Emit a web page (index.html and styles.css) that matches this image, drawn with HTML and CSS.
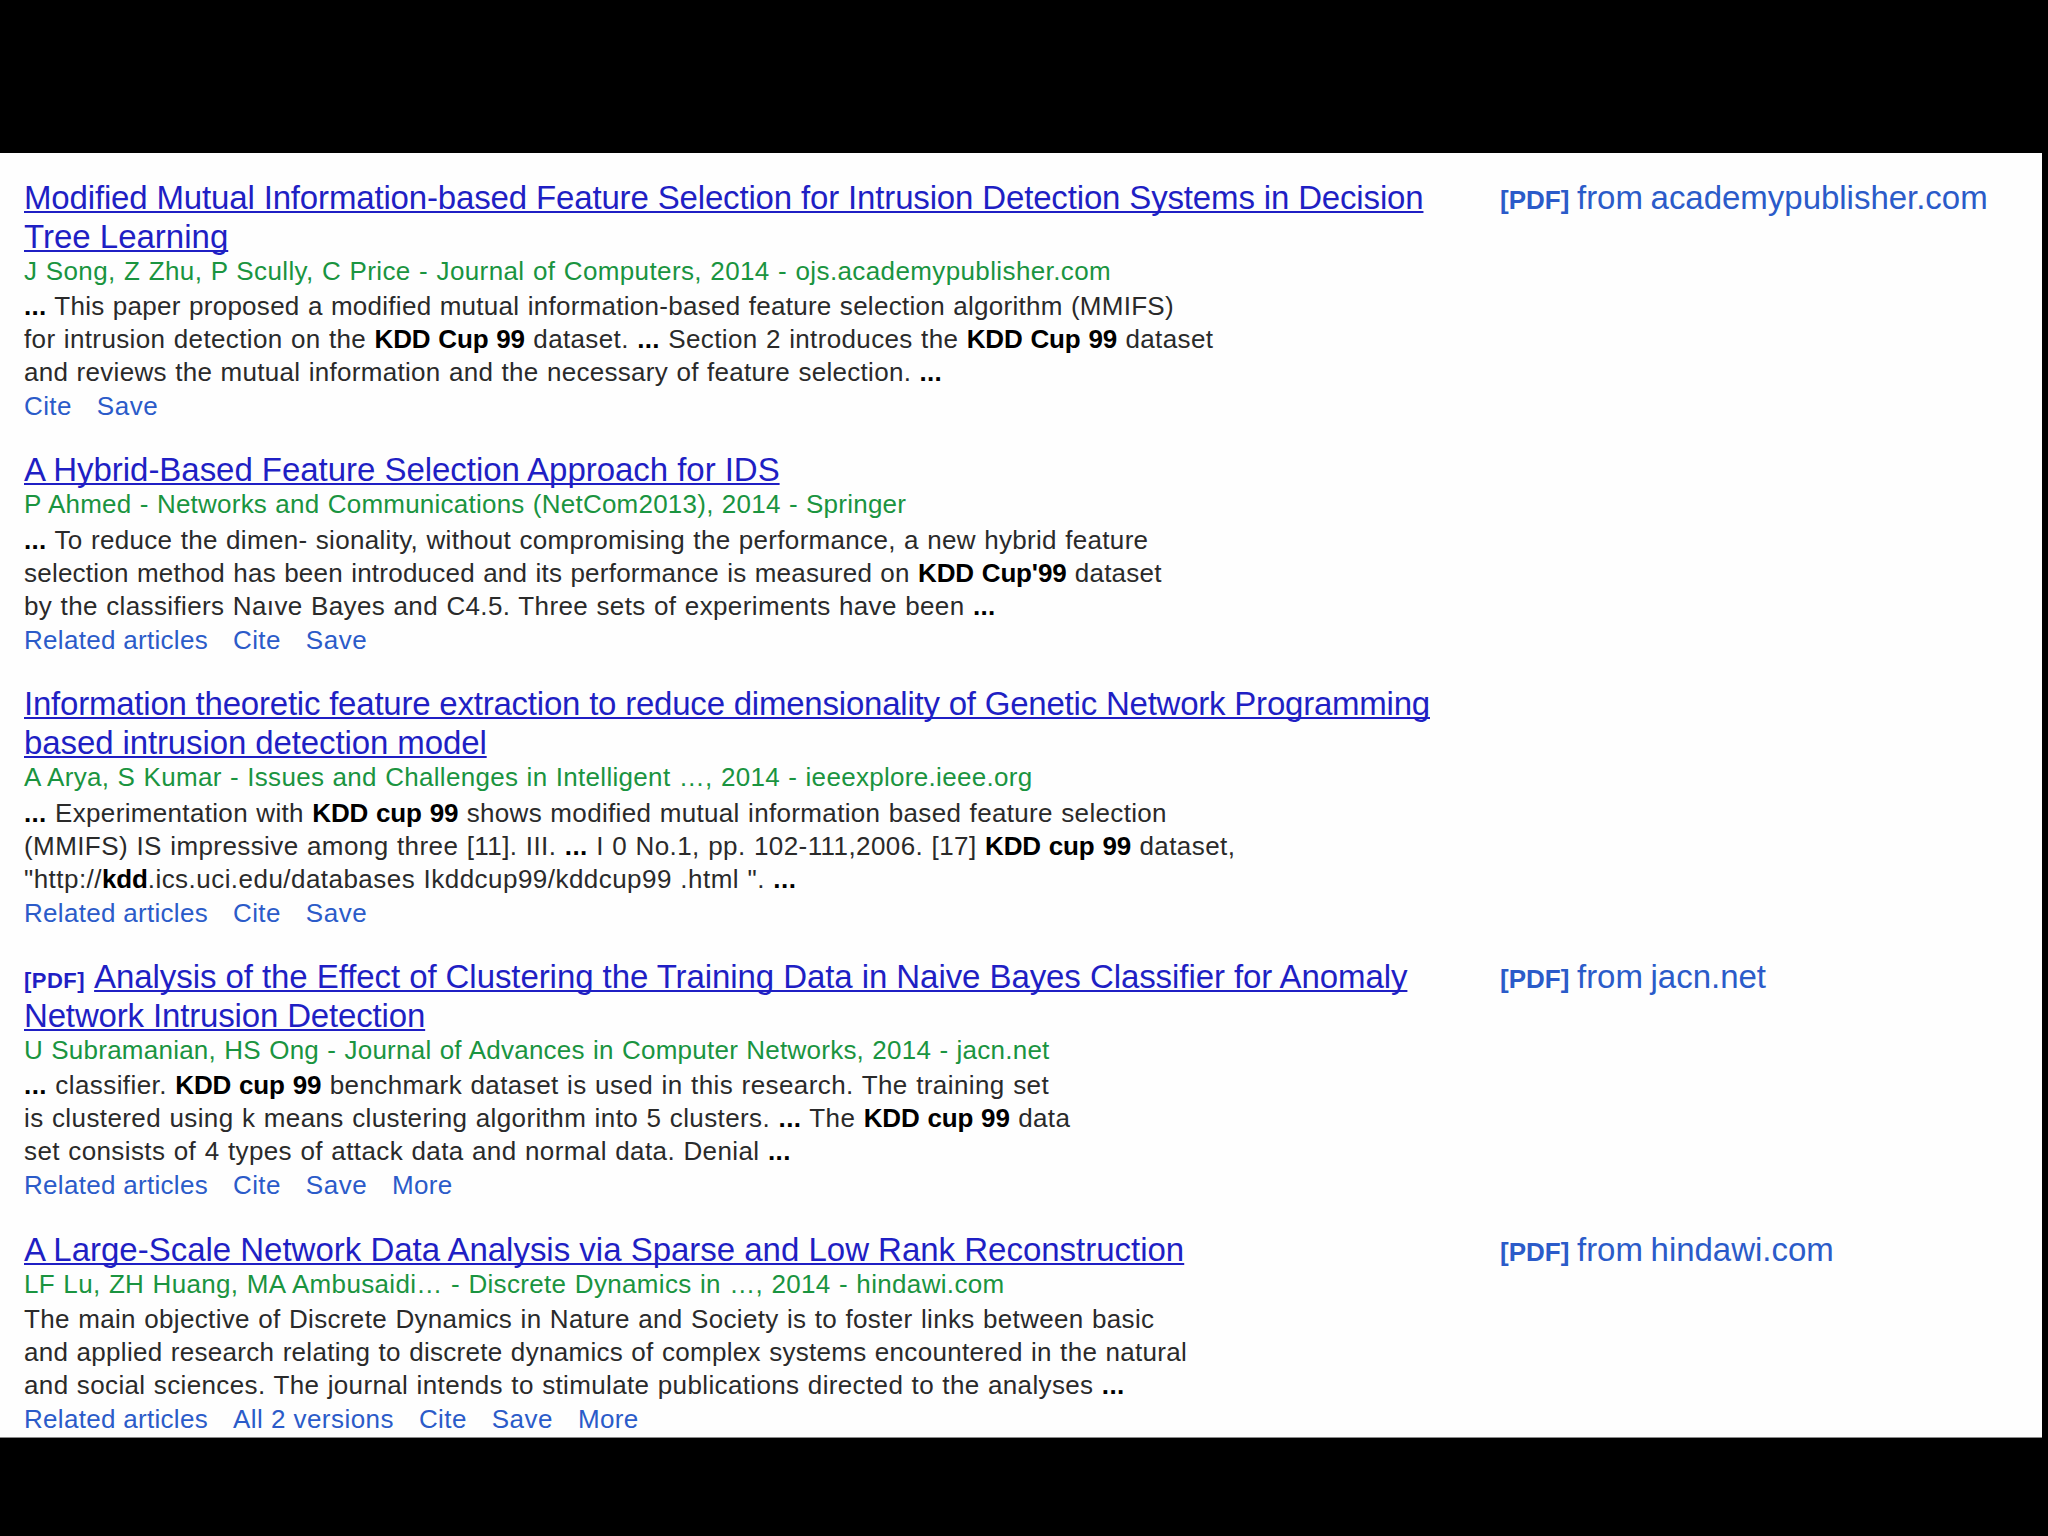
FILE: index.html
```html
<!DOCTYPE html>
<html lang="en">
<head>
<meta charset="utf-8">
<title>Scholar results</title>
<link rel="stylesheet" href="styles.css">
</head>
<body>
<main class="results">
  <article class="result first">
    <div class="entry">
      <h3 class="title"><a class="line">Modified Mutual Information-based Feature Selection for Intrusion Detection Systems in Decision</a><a class="line">Tree Learning</a></h3>
      <div class="authors">J Song, Z Zhu, P Scully, C Price - Journal of Computers, 2014 - ojs.academypublisher.com</div>
      <div class="snippet"><span class="line"><strong>...</strong> This paper proposed a modified mutual information-based feature selection algorithm (MMIFS)</span><span class="line">for intrusion detection on the <b>KDD Cup 99</b> dataset. <strong>...</strong> Section 2 introduces the <b>KDD Cup 99</b> dataset</span><span class="line">and reviews the mutual information and the necessary of feature selection. <strong>...</strong></span></div>
      <div class="actions"><a class="cite">Cite</a><a class="save">Save</a></div>
    </div>
    <a class="source"><span class="tag">[PDF]</span> from academypublisher.com</a>
  </article>
  <article class="result second">
    <div class="entry">
      <h3 class="title"><a class="line">A Hybrid-Based Feature Selection Approach for IDS</a></h3>
      <div class="authors">P Ahmed - Networks and Communications (NetCom2013), 2014 - Springer</div>
      <div class="snippet"><span class="line"><strong>...</strong> To reduce the dimen- sionality, without compromising the performance, a new hybrid feature</span><span class="line">selection method has been introduced and its performance is measured on <b>KDD Cup'99</b> dataset</span><span class="line">by the classifiers Naıve Bayes and C4.5. Three sets of experiments have been <strong>...</strong></span></div>
      <div class="actions"><a class="related">Related articles</a><a class="cite">Cite</a><a class="save">Save</a></div>
    </div>
  </article>
  <article class="result third">
    <div class="entry">
      <h3 class="title"><a class="line">Information theoretic feature extraction to reduce dimensionality of Genetic Network Programming</a><a class="line">based intrusion detection model</a></h3>
      <div class="authors">A Arya, S Kumar - Issues and Challenges in Intelligent …, 2014 - ieeexplore.ieee.org</div>
      <div class="snippet"><span class="line"><strong>...</strong> Experimentation with <b>KDD cup 99</b> shows modified mutual information based feature selection</span><span class="line">(MMIFS) IS impressive among three [11]. III. <strong>...</strong> I 0 No.1, pp. 102-111,2006. [17] <b>KDD cup 99</b> dataset,</span><span class="line">"http://<b>kdd</b>.ics.uci.edu/databases Ikddcup99/kddcup99 .html ". <strong>...</strong></span></div>
      <div class="actions"><a class="related">Related articles</a><a class="cite">Cite</a><a class="save">Save</a></div>
    </div>
  </article>
  <article class="result fourth">
    <div class="entry">
      <h3 class="title"><span class="tagged"><span class="tag">[PDF]</span><a class="line">Analysis of the Effect of Clustering the Training Data in Naive Bayes Classifier for Anomaly</a></span><a class="line last">Network Intrusion Detection</a></h3>
      <div class="authors">U Subramanian, HS Ong - Journal of Advances in Computer Networks, 2014 - jacn.net</div>
      <div class="snippet"><span class="line"><strong>...</strong> classifier. <b>KDD cup 99</b> benchmark dataset is used in this research. The training set</span><span class="line">is clustered using k means clustering algorithm into 5 clusters. <strong>...</strong> The <b>KDD cup 99</b> data</span><span class="line">set consists of 4 types of attack data and normal data. Denial <strong>...</strong></span></div>
      <div class="actions"><a class="related">Related articles</a><a class="cite">Cite</a><a class="save">Save</a><a class="more">More</a></div>
    </div>
    <a class="source"><span class="tag">[PDF]</span> from jacn.net</a>
  </article>
  <article class="result fifth">
    <div class="entry">
      <h3 class="title"><a class="line">A Large-Scale Network Data Analysis via Sparse and Low Rank Reconstruction</a></h3>
      <div class="authors">LF Lu, ZH Huang, MA Ambusaidi… - Discrete Dynamics in …, 2014 - hindawi.com</div>
      <div class="snippet"><span class="line">The main objective of Discrete Dynamics in Nature and Society is to foster links between basic</span><span class="line">and applied research relating to discrete dynamics of complex systems encountered in the natural</span><span class="line">and social sciences. The journal intends to stimulate publications directed to the analyses <strong>...</strong></span></div>
      <div class="actions"><a class="related">Related articles</a><a class="versions">All 2 versions</a><a class="cite">Cite</a><a class="save">Save</a><a class="more">More</a></div>
    </div>
    <a class="source"><span class="tag">[PDF]</span> from hindawi.com</a>
  </article>
</main>
</body>
</html>
```
FILE: styles.css
```css
* { box-sizing: border-box; }

body {
  margin: 0;
  height: 1536px;
  overflow: hidden;
  background: #000;
  font-family: "Liberation Sans", Arial, sans-serif;
}

.results {
  width: 2042px;
  height: 1285px;
  margin-top: 153px;
  padding: 24.6px 24px 0;
  background: #fefefe;
  border-bottom: 1px solid #8a8a8a;
  overflow: hidden;
}

.result {
  display: grid;
  grid-template-columns: 1476px 1fr;
  align-items: start;
  margin-bottom: 26px;
}

.entry { white-space: nowrap; }
.line { display: block; }

.title {
  margin: 0;
  font-size: 33px;
  line-height: 39px;
  font-weight: 400;
  color: #1f1fc4;
}
.title .line {
  width: max-content;
  text-decoration: underline;
  text-decoration-thickness: 2px;
  text-underline-offset: 2px;
  text-decoration-skip-ink: none;
}
.tagged {
  display: flex;
  align-items: baseline;
  gap: 9.2px;
  height: 39px;
}
.tag { font-weight: 700; }
.tagged .tag { font-size: 22px; letter-spacing: 0.45px; }

.authors {
  font-size: 26px;
  line-height: 30px;
  padding-bottom: 4.4px;
  word-spacing: 0.8px;
  color: #1a9440;
}

.snippet {
  font-size: 26px;
  line-height: 33px;
  word-spacing: 0.8px;
  color: #2a2a2a;
}
.snippet b { color: #000; letter-spacing: -0.15px; }
.snippet strong { color: #000; }

.actions {
  display: flex;
  gap: 25px;
  font-size: 26px;
  line-height: 35.4px;
  color: #2b5bc9;
}
.related { letter-spacing: 0.3px; }
.versions { letter-spacing: 0.45px; }
.cite { letter-spacing: 0.4px; }
.save { letter-spacing: 0.5px; }
.more { letter-spacing: 0.3px; }

.source {
  font-size: 33px;
  line-height: 39px;
  word-spacing: -1.5px;
  letter-spacing: -0.02px;
  color: #2b5bc9;
  white-space: nowrap;
}
.source .tag { font-size: 26px; letter-spacing: 0; }

/* Tracking for each text line */
.first .title .line:first-child { letter-spacing: -0.155px; }
.first .authors { letter-spacing: 0.38px; }
.first .snippet .line:nth-child(1) { letter-spacing: 0.273px; }
.first .snippet .line:nth-child(2) { letter-spacing: 0.363px; }
.first .snippet .line:nth-child(3) { letter-spacing: 0.3px; }

.second .title { letter-spacing: -0.04px; }
.second .authors { letter-spacing: 0.233px; }
.second .snippet .line:nth-child(1) { letter-spacing: 0.315px; }
.second .snippet .line:nth-child(2) { letter-spacing: 0.23px; }
.second .snippet .line:nth-child(3) { letter-spacing: 0.37px; }

.third .title .line:nth-child(1) { letter-spacing: -0.219px; }
.third .title .line:nth-child(2) { letter-spacing: -0.106px; }
.third .authors { letter-spacing: 0.302px; }
.third .snippet .line:nth-child(1) { letter-spacing: 0.335px; }
.third .snippet .line:nth-child(2) { letter-spacing: 0.41px; }
.third .snippet .line:nth-child(3) { letter-spacing: 0.46px; }

.fourth .title .line { letter-spacing: -0.073px; }
.fourth .title .last { letter-spacing: -0.155px; }
.fourth .authors { letter-spacing: 0.24px; }
.fourth .snippet .line:nth-child(1) { letter-spacing: 0.412px; }
.fourth .snippet .line:nth-child(2) { letter-spacing: 0.391px; }
.fourth .snippet .line:nth-child(3) { letter-spacing: 0.392px; }

.fifth .title { letter-spacing: -0.012px; }
.fifth .authors { letter-spacing: 0.335px; }
.fifth .snippet .line:nth-child(1) { letter-spacing: 0.337px; }
.fifth .snippet .line:nth-child(2) { letter-spacing: 0.294px; }
.fifth .snippet .line:nth-child(3) { letter-spacing: 0.36px; }
```
